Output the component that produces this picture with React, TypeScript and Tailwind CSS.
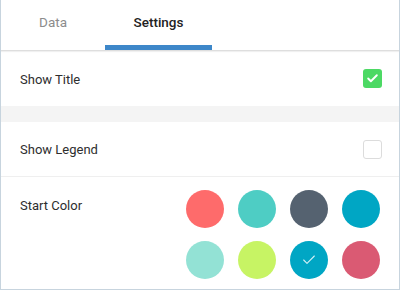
import { Check } from 'lucide-react'

const colors = ['#fe6b6b', '#4ecdc4', '#556270', '#00a6c4', '#93e2d5', '#c7f464', '#00a6c4', '#da5a73']

function Box({ on }: { on: boolean }) {
  if (on)
    return (
      <div className="w-[19px] h-[19px] rounded-[3px] bg-[#4cd964] flex items-center justify-center">
        <Check size={13} strokeWidth={3.5} color="#fff" />
      </div>
    )
  return <div className="w-[19px] h-[19px] rounded-[3px] border border-[#dcdcdc] bg-white" />
}

export default function App() {
  return (
    <div className="w-[400px] h-[290px] bg-white border-x border-b border-[#c7d4de] overflow-hidden font-['Roboto',sans-serif] text-[13px] text-[#2e2e2e]">
      <div className="flex h-[51px] border-b border-[#dedede] shadow-[0_1px_1px_rgba(0,0,0,0.06)] text-[13.5px]">
        <div className="w-[104px] flex items-center justify-center pb-[5px] text-[#8c8c8c]">Data</div>
        <div className="relative w-[107px] flex items-center justify-center pb-[5px] font-medium text-[#222]">
          Settings
          <div className="absolute left-0 right-0 bottom-0 h-[5px] bg-[#3d87c9]" />
        </div>
      </div>
      <div className="h-[55px] flex items-center justify-between pl-[19px] pr-[17px]">
        <span className="pt-[2px]">Show Title</span>
        <Box on />
      </div>
      <div className="h-[16px] bg-[#f4f4f4]" />
      <div className="h-[55px] flex items-center justify-between pl-[19px] pr-[17px] border-b border-[#efefef]">
        <span className="pt-[2px]">Show Legend</span>
        <Box on={false} />
      </div>
      <div className="flex justify-between pl-[19px] pr-[19px] pt-[13px]">
        <span className="pt-[6px]">Start Color</span>
        <div className="grid grid-cols-4 gap-x-[14px] gap-y-[13px]">
          {colors.map((c, i) => (
            <div key={i} className="w-[38px] h-[38px] rounded-full flex items-center justify-center" style={{ backgroundColor: c }}>
              {i === 6 && <Check size={16} strokeWidth={1.6} color="#d3f0f6" />}
            </div>
          ))}
        </div>
      </div>
    </div>
  )
}
